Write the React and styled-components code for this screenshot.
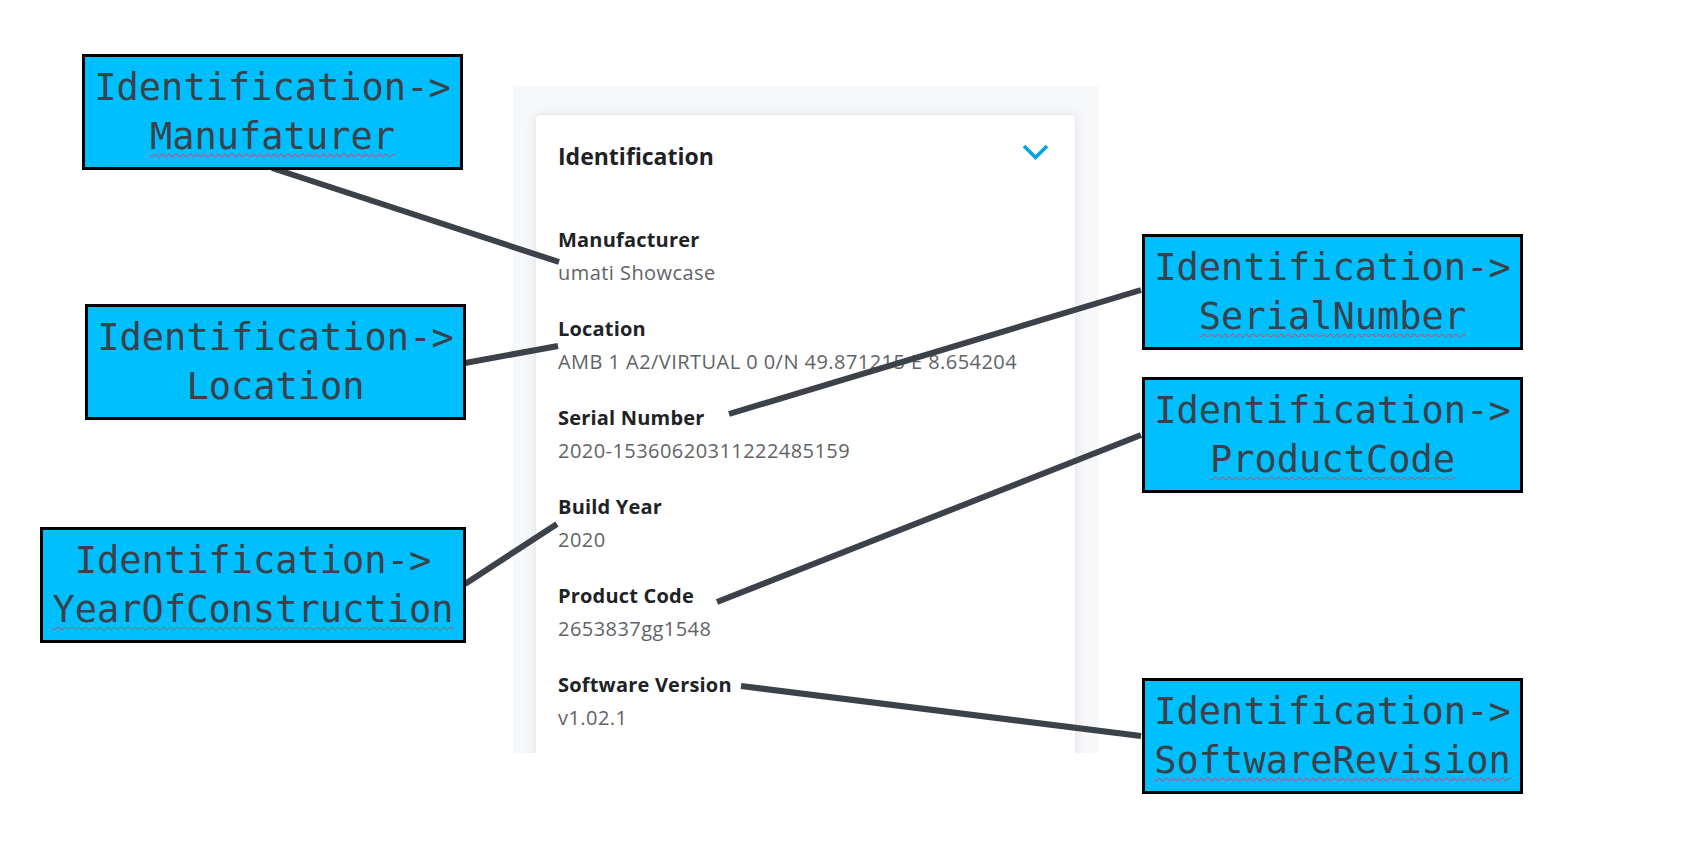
import React from 'react';
import styled, { createGlobalStyle } from 'styled-components';

const GlobalStyle = createGlobalStyle`
    body {
        margin: 0;
        background: #ffffff;
    }
`;

const fields = [
    { label: 'Manufacturer', value: 'umati Showcase' },
    { label: 'Location', value: 'AMB 1 A2/VIRTUAL 0 0/N 49.871215 E 8.654204' },
    { label: 'Serial Number', value: '2020-15360620311222485159' },
    { label: 'Build Year', value: '2020' },
    { label: 'Product Code', value: '2653837gg1548' },
    { label: 'Software Version', value: 'v1.02.1' },
];

// callouts sit on the diagram canvas, so their place is the content
const callouts = [
    { node: 'Manufaturer', left: 82, top: 54, width: 381, typo: true },
    { node: 'Location', left: 85, top: 304, width: 381 },
    { node: 'YearOfConstruction', left: 40, top: 527, width: 426, typo: true },
    { node: 'SerialNumber', left: 1142, top: 234, width: 381, typo: true },
    { node: 'ProductCode', left: 1142, top: 377, width: 381, typo: true },
    { node: 'SoftwareRevision', left: 1142, top: 678, width: 381, typo: true },
];

const connectors = [
    [272, 168, 559, 262],
    [465, 363, 558, 346],
    [729, 414, 1141, 290],
    [465, 584, 557, 524],
    [717, 602, 1141, 435],
    [741, 686, 1141, 736],
];

const Canvas = styled.div`
    position: relative;
    width: 1685px;
    height: 850px;
    overflow: hidden;
    box-sizing: border-box;
    padding: 86px 0 0 513px;
`;

const Panel = styled.div`
    width: 585px;
    height: 667px;
    box-sizing: border-box;
    padding: 29px 23px 0 23px;
    background: #f7f8f9;
    overflow: hidden;
`;

const Card = styled.div`
    height: 700px;
    box-sizing: border-box;
    padding: 26px 26px 0 22px;
    background: #ffffff;
    border-radius: 4px;
    box-shadow: 0 0 14px rgba(0, 0, 0, 0.09), 0 -1px 2px rgba(0, 0, 0, 0.05);
    font-family: "Open Sans", "Noto Sans", sans-serif;
`;

const Header = styled.div`
    display: flex;
    justify-content: space-between;
    height: 30px;
    align-items: center;
`;

const Title = styled.h2`
    margin: 0;
    font-size: 23px;
    font-weight: 700;
    color: #1f2124;
    line-height: 30px;
`;

const Chevron = styled.svg`
    align-self: flex-start;
    margin-top: 3px;
    width: 27px;
    height: 17px;
`;

const List = styled.dl`
    margin: 52px 0 0;
    display: flex;
    flex-direction: column;
    gap: 23px;
`;

const Item = styled.div`
    display: flex;
    flex-direction: column;
`;

const Label = styled.dt`
    font-size: 20px;
    font-weight: 700;
    letter-spacing: 0.2px;
    line-height: 33px;
    color: #202225;
`;

const Value = styled.dd`
    margin: 0;
    font-size: 20px;
    letter-spacing: 0.45px;
    line-height: 33px;
    color: #5f6368;
`;

const Wires = styled.svg`
    position: absolute;
    left: 0;
    top: 0;
    pointer-events: none;
`;

const Callout = styled.div`
    position: absolute;
    box-sizing: border-box;
    height: 116px;
    display: flex;
    flex-direction: column;
    align-items: center;
    justify-content: center;
    background: #00bfff;
    border: 3px solid #000000;
    font-family: "DejaVu Sans Mono", monospace;
    font-size: 37px;
    line-height: 49px;
    color: #3b4149;
    white-space: nowrap;
`;

const NodeName = styled.span`
    text-decoration: ${p => (p.$typo ? 'underline wavy #e0404a' : 'none')};
    text-decoration-thickness: 1px;
    text-underline-offset: 4px;
`;

export default function App() {
    return (
        <Canvas>
            <GlobalStyle />
            <Panel>
                <Card>
                    <Header>
                        <Title>Identification</Title>
                        <Chevron viewBox="0 0 27 17">
                            <path d="M2 2 L13.5 13.5 L25 2" fill="none" stroke="#00a4e4" strokeWidth="3.6" />
                        </Chevron>
                    </Header>
                    <List>
                        {fields.map(f => (
                            <Item key={f.label}>
                                <Label>{f.label}</Label>
                                <Value>{f.value}</Value>
                            </Item>
                        ))}
                    </List>
                </Card>
            </Panel>
            <Wires width="1685" height="850">
                {connectors.map(([x1, y1, x2, y2], i) => (
                    <line key={i} x1={x1} y1={y1} x2={x2} y2={y2} stroke="#3c4249" strokeWidth="6" />
                ))}
            </Wires>
            {callouts.map(c => (
                <Callout key={c.node} style={{ left: c.left, top: c.top, width: c.width }}>
                    <span>Identification-&gt;</span>
                    <NodeName $typo={c.typo}>{c.node}</NodeName>
                </Callout>
            ))}
        </Canvas>
    );
}
